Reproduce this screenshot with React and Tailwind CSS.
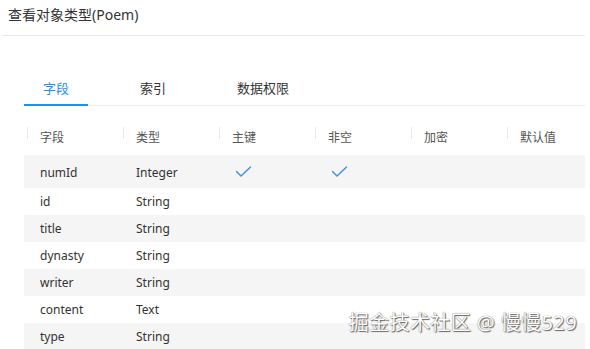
const columns = ['字段', '类型', '主键', '非空', '加密', '默认值'];

const rows = [
  { name: 'numId', type: 'Integer', pk: true, notNull: true },
  { name: 'id', type: 'String' },
  { name: 'title', type: 'String' },
  { name: 'dynasty', type: 'String' },
  { name: 'writer', type: 'String' },
  { name: 'content', type: 'Text' },
  { name: 'type', type: 'String' },
];

function Check() {
  return (
    <svg width="18" height="12" viewBox="0 0 18 12" className="ml-[2px]">
      <path d="M1.5 5.5 L6 10 L15.5 1" fill="none" stroke="#3b8ff0" strokeWidth="1.4" strokeLinecap="round" />
    </svg>
  );
}

export default function App() {
  const font = { fontFamily: '"Noto Sans", "Noto Sans CJK SC", sans-serif' };

  return (
    <div className="relative w-[590px] h-[349px] bg-white overflow-hidden" style={font}>
      <div className="ml-[2px] w-[583px] h-[36px] border-b border-[#e6e6e6] pl-[6px] pt-[2px]">
        <span className="text-[14px] leading-[20px] text-[#333]">查看对象类型(Poem)</span>
      </div>

      <div className="ml-[24px] w-[561px] mt-[38px]">
        {/* tabs */}
        <div className="flex gap-[33px] border-b border-[#ececec] h-[32px]">
          {['字段', '索引', '数据权限'].map((t, i) => (
            <div
              key={t}
              className={
                i === 0
                  ? 'px-[19px] text-[13px] leading-[18px] pt-[5px] text-[#1890ff] border-b-2 border-[#1890ff] -mb-px'
                  : 'px-[19px] text-[13px] leading-[18px] pt-[5px] text-[#333]'
              }
            >
              {t}
            </div>
          ))}
        </div>

        {/* table header */}
        <div className="flex h-[48px] mt-[1px]">
          {columns.map((c, i) => (
            <div key={c} className={i === 5 ? 'relative w-[81px]' : 'relative w-[96px]'}>
              <span className="absolute left-[3px] top-[20px] w-px h-[12px] bg-[#e8e8e8]" />
              <span className="absolute left-[16px] top-[23px] text-[12px] leading-[16px] text-[#555]">{c}</span>
            </div>
          ))}
        </div>

        {/* table body */}
        {rows.map((r, i) => (
          <div
            key={r.name}
            className={
              (i % 2 === 0 ? 'bg-[#f5f5f5] ' : 'bg-white ') +
              (i === 0 ? 'h-[33px] ' : 'h-[27px] ') +
              'flex items-center text-[12px] text-[#333]'
            }
          >
            <div className={i === 0 ? 'w-[96px] pl-[16px] pt-[3px]' : 'w-[96px] pl-[16px]'}>{r.name}</div>
            <div className={i === 0 ? 'w-[96px] pl-[16px] pt-[3px]' : 'w-[96px] pl-[16px]'}>{r.type}</div>
            <div className="w-[96px] pl-[17px] flex">{r.pk && <Check />}</div>
            <div className="w-[96px] pl-[17px] flex">{r.notNull && <Check />}</div>
            <div className="w-[96px]" />
            <div className="w-[81px]" />
          </div>
        ))}
      </div>

      <div
        className="absolute right-[13px] bottom-[14px] text-[20px] leading-[24px] tracking-[0.4px] text-white"
        style={{ textShadow: '0 0 1px #555, 1px 1px 1px #666' }}
      >
        掘金技术社区 @ 慢慢529
      </div>
    </div>
  );
}
